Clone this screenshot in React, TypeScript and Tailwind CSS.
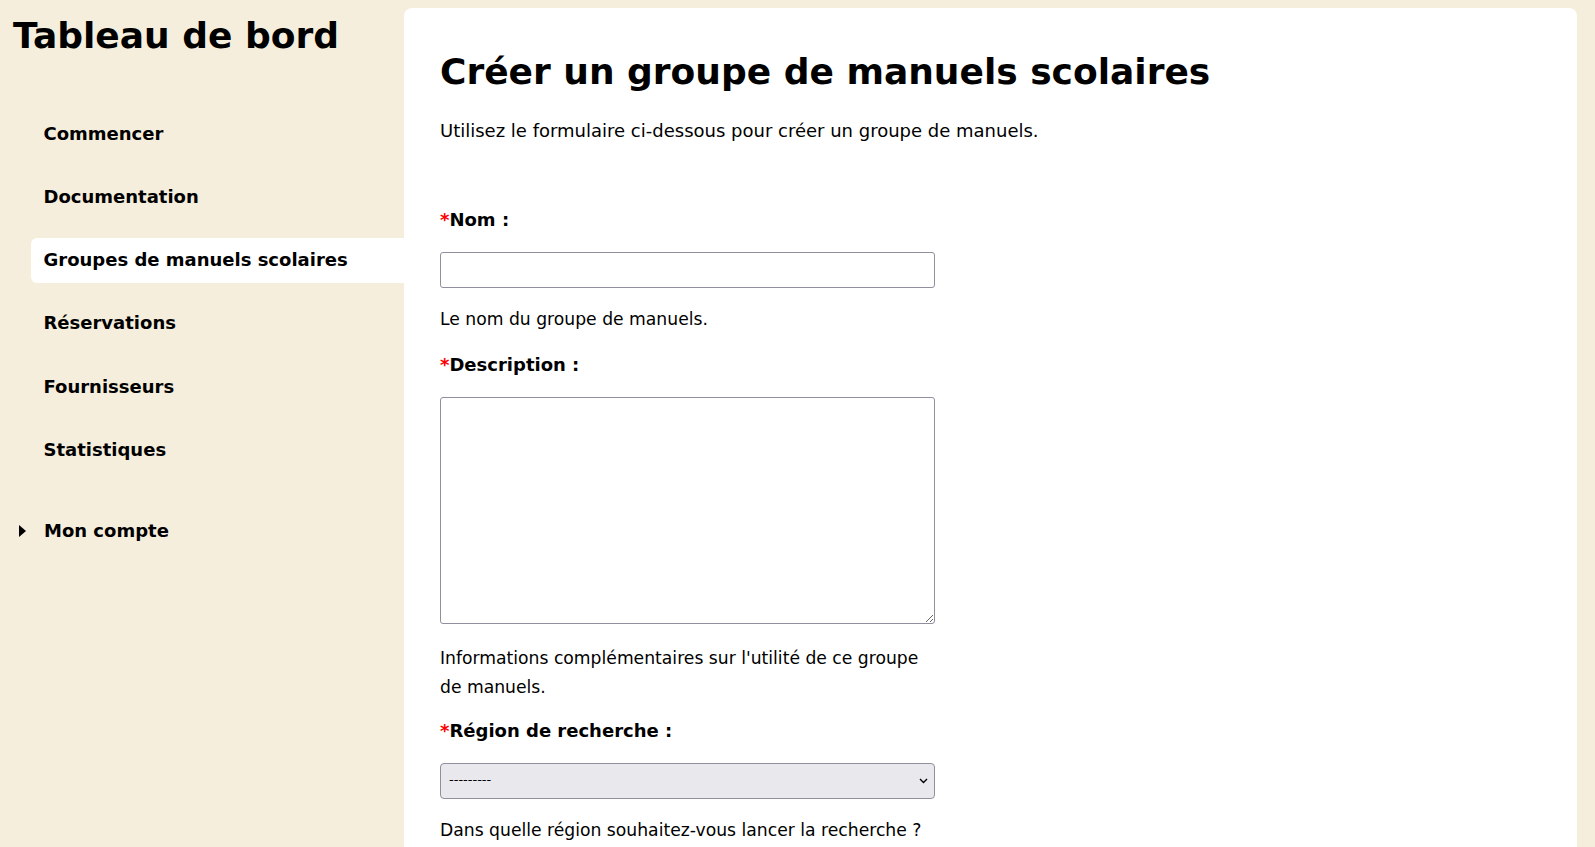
import React from 'react';

const navItems = [
  'Commencer',
  'Documentation',
  'Groupes de manuels scolaires',
  'Réservations',
  'Fournisseurs',
  'Statistiques',
];

function Label({ children }: { children: React.ReactNode }) {
  return (
    <label className="block font-bold mb-[17px]">
      <span className="text-[#ff0000]">*</span>
      {children}
    </label>
  );
}

export default function App() {
  return (
    <div className="min-h-screen bg-[#f5eedc] flex text-black text-[18px] font-['DejaVu_Sans',sans-serif]">
      {/* Sidebar */}
      <aside className="w-[404px] shrink-0">
        <h1 className="pl-[13px] pt-[15px] text-[36px] leading-[42px] font-bold">Tableau de bord</h1>
        <nav className="mt-[54px] pl-[31px] flex flex-col gap-[18.3px]">
          {navItems.map((item) => (
            <a
              key={item}
              href="#"
              className={
                'block h-[45px] pl-[12.5px] pt-[11.5px] leading-[21px] font-bold rounded-l-[6px] ' +
                (item === 'Groupes de manuels scolaires' ? 'bg-white' : '')
              }
            >
              {item}
            </a>
          ))}
        </nav>
        <div className="mt-[48px] flex items-center leading-[21px] font-bold">
          <svg width="7" height="12" viewBox="0 0 7 12" className="ml-[19px] mr-[18px]">
            <path d="M0 0 L7 6 L0 12 Z" fill="#000" />
          </svg>
          <span>Mon compte</span>
        </div>
      </aside>

      {/* Main panel */}
      <main className="flex-1 mt-2 mr-[18px] bg-white rounded-t-[8px] pl-9 pt-[43px] pb-10">
        <h2 className="text-[36px] leading-[42px] font-bold">Créer un groupe de manuels scolaires</h2>
        <p className="mt-[24px] leading-[28.8px]">
          Utilisez le formulaire ci-dessous pour créer un groupe de manuels.
        </p>

        <form className="mt-[60px] w-[495px] leading-[28.8px]">
          <Label>Nom :</Label>
          <input
            type="text"
            className="block w-full h-[36px] border border-[#8f8f9d] rounded-[3px] bg-white px-2 mb-[17px]"
          />
          <p className="mb-[18px] text-[17.2px]">Le nom du groupe de manuels.</p>

          <Label>Description :</Label>
          <textarea className="block w-full h-[227px] border border-[#8f8f9d] rounded-[3px] bg-white mb-[20px]" />
          <p className="mb-[15px] text-[17.2px]">
            Informations complémentaires sur l'utilité de ce groupe de manuels.
          </p>

          <Label>Région de recherche :</Label>
          <div className="relative mb-[17px]">
            <select className="block w-full h-[36px] appearance-none border border-[#8f8f9d] rounded-[4px] bg-[#e9e9ed] pl-[8px] text-[13px] text-black">
              <option>---------</option>
            </select>
            <svg
              width="9"
              height="6"
              viewBox="0 0 9 6"
              className="absolute right-[7px] top-[15px] pointer-events-none"
            >
              <path d="M1 1 L4.5 4.5 L8 1" fill="none" stroke="#000" strokeWidth="1.4" />
            </svg>
          </div>
          <p className="text-[17.2px]">Dans quelle région souhaitez-vous lancer la recherche ?</p>
        </form>
      </main>
    </div>
  );
}
